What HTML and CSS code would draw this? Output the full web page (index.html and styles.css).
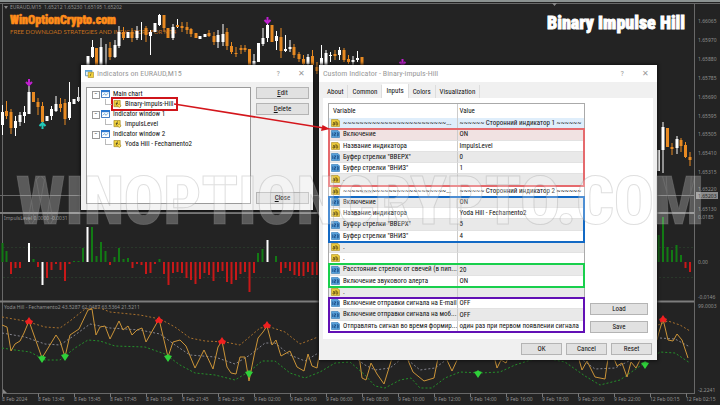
FILE: index.html
```html
<!DOCTYPE html>
<html lang="en">
<head>
<meta charset="utf-8">
<title>Binary Impulse Hill</title>
<link rel="stylesheet" href="styles.css">
</head>
<body>
<main class="desktop">
<svg class="chart" viewBox="0 0 720 405" role="img" aria-label="EURAUD M15 chart">
  <rect class="topbar" width="720" height="2"/>
  <path class="grid" d="M0 3.500H720M2.500 3V393.500H695M694.500 3V393M0 195.500H694"/>
  <path class="split" d="M0 213H694M0 301.500H694"/>
  <path class="level" d="M3 247.500H694M3 277.500H694"/>
  <path class="ticks" d="M2.500 393v4M38.500 393v4M74.500 393v4M110.500 393v4M146.500 393v4M182.500 393v4M218.500 393v4M254.500 393v4M290.500 393v4M326.500 393v4M362.500 393v4M398.500 393v4M434.500 393v4M470.500 393v4M506.500 393v4M542.500 393v4M578.500 393v4M614.500 393v4M650.500 393v4M686.500 393v4"/>
  <path class="mark" d="M4 6h4l-2 3zM552 3h5l-2.500 3zM3 393v-4l4 4z"/>
  <g class="label">
    <text x="10" y="9">EURAUD,M15&#160; 1.65212 1.65230 1.65195 1.65202</text>
    <text x="4" y="220">ImpulsLevel 0.0000 -0.0031</text>
    <text x="4" y="309">Yoda Hill - Fechamento2 43.5287 62.0487 63.5364 21.5211</text>
  </g>
  <g class="label">
    <text x="698" y="23">1.66065</text><text x="698" y="42">1.65970</text><text x="698" y="61">1.65880</text><text x="698" y="80">1.65785</text><text x="698" y="99">1.65690</text><text x="698" y="118">1.65595</text><text x="698" y="136">1.65505</text><text x="698" y="155">1.65410</text><text x="698" y="174">1.65315</text><text x="698" y="191">1.65220</text><text x="698" y="211">1.65130</text><text x="698" y="219">0.0185</text><text x="698" y="264">0.00</text><text x="698" y="299">-0.0146</text><text x="698" y="308">99.0003</text><text x="698" y="392">-2.2241</text>
  </g>
  <rect class="tag" x="696" y="192" width="22" height="7"/><text class="tagtext" x="698" y="198">1.65203</text>
  <g class="label">
    <text x="2" y="401">8 Feb 2024</text><text x="38" y="401">8 Feb 13:45</text><text x="74" y="401">8 Feb 15:45</text><text x="110" y="401">8 Feb 17:45</text><text x="146" y="401">8 Feb 19:45</text><text x="182" y="401">8 Feb 21:45</text><text x="218" y="401">8 Feb 23:45</text><text x="254" y="401">9 Feb 02:00</text><text x="290" y="401">9 Feb 04:00</text><text x="326" y="401">9 Feb 06:00</text><text x="362" y="401">9 Feb 08:00</text><text x="398" y="401">9 Feb 10:00</text><text x="434" y="401">9 Feb 12:00</text><text x="470" y="401">9 Feb 14:00</text><text x="506" y="401">9 Feb 16:00</text><text x="542" y="401">9 Feb 18:00</text><text x="578" y="401">9 Feb 20:00</text><text x="614" y="401">9 Feb 22:00</text><text x="650" y="401">12 Feb 00:15</text><text x="686" y="401">12 Feb 02:15</text>
  </g>
  <text class="brand" x="10" y="24">WinOptionCrypto.com</text>
  <text class="slogan" x="10" y="34">FREE DOWNLOAD STRATEGIES AND INDICATORS FOR MT4</text>
  <text class="headline" x="685" y="29">Binary Impulse Hill</text>

  <path class="wick up" d="M2.500 105V135M15.500 116V136M20 112V126M24.500 106V123M29 86V114M51.500 106V120M56 96V112M69.500 82V120M78.500 87V102M92.500 40V58M101 38V65M106 44V65M115 40V58M119 26V48M137 26V40M141.500 22V40M150.500 30V55M159.500 14V26M173 24V40M177.500 19V28M218 30V48M223 24V46M254 54V65M263 28V46M267.500 23V42M276.500 31V50M285.500 35V52M290 40V52M308 54V65M321.500 45V65M326 50V65M330.500 52V62M339.500 47V60M353 56V65M357.500 51V62M663 122V173M677 136V154"/>
  <path class="wick down" d="M6.500 101V119M11 109V134M38 98V115M42.500 102V125M60.500 98V112M65 99V125M110 42V60M123.500 27V40M132 28V42M146 26V42M164 15V32M182 22V32M187 22V34M191 28V37M209 30V37M214 32V45M227 28V50M231.500 42V54M236 47V57M241 45V54M245 45V52M281 28V58M294 44V58M299 52V62M303.500 55V65M312.500 50V65M335 50V60M344 48V62M348.500 55V64M672 143V155M681 138V152M685.500 142V158M690 152V166M317 62V74"/>
  <path class="body up" d="M2.500 112V125M15.500 121V128M20 115V122M24.500 112V116M29 92V114M47 116V121M51.500 109V116M56 104V111M69.500 102V118M74 99V104M78.500 97V101M88 56V66M92.500 47V57M101 47V66M115 45V57M119 32V46M128 32V38M137 31V38M150.500 32V36M155 23V32M159.500 15V25M173 27V38M200 36V39M205 34V37M218 35V42M223 34V42M254 61V66M258.500 43V62M263 38V44M267.500 25V38M276.500 36V41M285.500 49V51M290 47V49M308 57V64M321.500 58V65M326 53V65M330.500 55V56M339.500 50V55M353 60V62M357.500 58V60M658.500 150V171M663 127V150M677 139V148"/>
  <path class="body down" d="M6.500 111V116M11 112V128M33.500 92V102M38 102V107M42.500 106V122M60.500 104V108M65 103V119M96.500 48V66M110 48V57M123.500 32V38M132 32V38M146 28V35M164 15V28M168 28V38M177.500 25V27M182 26V28M187 27V30M191 29V34M196 33V38M209 33V36M214 36V42M227 32V46M231.500 46V52M236 53V54M241 48V50M245 48V50M249.500 49V65M272 25V42M281 37V51M294 47V55M299 54V59M303.500 59V64M312.500 56V65M317 67V71M335 54V56M344 50V60M348.500 59V62M362 57V65M667.500 128V147M672 147V149M681 140V146M685.500 145V157M690 157V160"/>
  <g class="sell"><path id="sell" d="M29 79v6M26 82l3 3 3-3"/><use href="#sell" x="238.500" y="-62"/><use href="#sell" x="373.500" y="-20"/></g>
  <path class="buy" d="M42.500 129v-6M39.500 126l3-3 3 3"/>

  <path class="hist pos" d="M2.500 243V262M6.500 251V262M33.500 259V262M74 261V262M78.500 261V262M83 248V262M92 227V262M96.500 256V262M101 242V262M105.500 251V262M114.500 257V262M119 248V262M123.500 259V262M128 258V262M159.500 259V262M258 253V262M262.500 249V262M276 256V262M658.500 235V262M663 217V262M667.500 247V262M672 250V262M676.500 245V262M681 255V262"/>
  <path class="hist neg" d="M11 262V274M15.500 262V268M20 262V268M38 262V267M47 262V278M51.500 262V270M56 262V264M60.500 262V270M65 262V281M69.500 262V264M110 262V265M132.500 262V268M137 262V264M141.500 262V265M146 262V274M150.500 262V273M155 262V264M164 262V274M168.500 262V285M173 262V273M177.500 262V272M182 262V273M186.500 262V278M191 262V280M195.500 262V284M200 262V279M204.500 262V273M209 262V275M213.500 262V281M218 262V272M222.500 262V271M227 262V282M231.500 262V284M236 262V280M240.500 262V274M245 262V272M249.500 262V292M254 262V273M281 262V273M285.500 262V268M290 262V271M294.500 262V275M299 262V276M303.500 262V276M308 262V272M312.500 262V275M317 262V275M685.500 262V268M690 262V272"/>
  <path class="hist peak" d="M29 243V262M42.500 262V285M87.500 227V262M267.500 240V262"/>

  <path class="dots hi" d="M2 317L25 321 45 327 60 328 70 321 85 309 100 308 110 312 140 315 160 319 175 327 190 338 205 341 225 342 240 345 260 328 270 327 285 332 300 344 318 337M658 325L668 321 680 325 690 331"/>
  <path class="dots mid" d="M2 333L25 337 45 344 60 345 75 335 90 324 110 328 140 330 160 334 175 345 190 355 215 357 235 364 250 355 265 343 275 343 290 355 305 361 320 352M358 360L365 365 375 370 390 368 400 360M408 360L420 370 435 368 446 360M580 358L595 369 615 368 635 358M660 338L675 339 690 347"/>
  <path class="dots lo" d="M2 348L15 350 30 352 45 360 60 360 75 348 88 340 100 341 115 346 145 347 165 354 180 365 195 373 215 375 235 380 250 371 262 361 275 361 290 373 305 378 320 372 335 363 350 362 365 375 375 386 385 388 400 380 411 378 420 388 432 388 445 378 460 372 480 373 500 372 515 365 540 357 565 362 585 376 600 385 620 380 640 366 660 352 675 353 690 363"/>
  <path class="yoda" d="M2 325L7 327 11 351 15 344 20 341 24 333 29 321 42 358 56 335 60 341 65 357 70 335 79 329 88 310 92 309 96 335 100 327 105 326 110 339 119 321 123 330 128 326 132 335 137 330 142 328 146 342 159 319 168 357 173 342 180 340 186 346 195 368 204 350 213 369 218 347 222 341 227 367 231 373 236 374 240 357 245 357 249 381 254 356 258 338 263 332 267 326 272 345 276 340 281 356 290 351 297 367 304 371 308 354 312 366 317 368 320 350M359 355L362 378 366 380 371 363 377 374 384 384 392 358M407 358L413 372 424 381 434 378 438 358M446 358L452 371 458 358M494 356L497 368 501 360 506 363 508 358M578 356L582 370 587 361 595 377 605 379 608 358M613 356L617 366 622 363 627 377 631 362 636 368 641 358 648 350 657 340 659 332 663 319 668 340 673 341 677 334 682 340 688 358"/>
  <g class="top"><path id="top" d="M29 317l2 3 2 1-1.500 3.500-2.500-1-2.500 1L25 321l2-1z"/><use href="#top" x="130" y="-1"/><use href="#top" x="193" y="20"/><use href="#top" x="238" y="4"/><use href="#top" x="634" y="-2"/></g>
  <g class="low"><path id="low" d="M42 363l-2-3-2-3 3-1 1-1 1 1 3 1-2 3z"/><use href="#low" x="23" y="-2"/><use href="#low" x="126" y="-1"/><use href="#low" x="207" y="15"/><use href="#low" x="436" y="15"/><use href="#low" x="603" y="6"/></g>
</svg>

<svg class="defs" aria-hidden="true">
  <symbol id="i-chart" viewBox="0 0 10 9"><path fill="#fff" stroke="#2a6ab8" d="M.5.5h9v8h-9z"/><path fill="#2a78d0" d="M0 0h10v2.500H0z"/><path fill="none" stroke="#3a86c8" stroke-width=".8" d="M2 6l2-2 1.500 2L8 3.500"/></symbol>
  <symbol id="i-fx" viewBox="0 0 9 9"><path fill="#f2d23c" stroke="#9a7c16" stroke-width=".7" d="M.5.500h7v7h-7z"/><path fill="none" stroke="#3f3a22" stroke-width=".8" d="M5 2C3.500 1.500 4 4 3 6M2.500 4h2.500"/><path fill="#ffe95e" stroke="#8a6c10" stroke-width=".6" d="M6.500 4.500L8.500 6.500 6.500 8.500 4.500 6.500z"/></symbol>
  <symbol id="i-win" viewBox="0 0 10 9"><path fill="#e5f2fb" stroke="#5f94b5" d="M.5.500h7v6h-7z"/><path fill="#5fa5d8" d="M0 0h8v2H0z"/><path fill="#f2d23c" stroke="#9a7c16" stroke-width=".6" d="M3.500 2.500h6v6h-6z"/><path fill="none" stroke="#3f3a22" stroke-width=".7" d="M7 4c-1 0-.5 2-1.500 3"/></symbol>
  <symbol id="i-ab" viewBox="0 0 9 8"><path fill="#e9c93a" stroke="#a98b22" stroke-width=".6" d="M.500.500h6.500l1.500 1.500v5.500h-8z"/><path fill="none" stroke="#655316" stroke-width=".8" d="M2 3.500h1.500v2.500H2V4.800h1.500M5 2v4h1.700V3.800H5"/></symbol>
  <symbol id="i-num" viewBox="0 0 9 8"><path fill="#58a2dc" stroke="#2f77b4" stroke-width=".6" d="M.500.500h6.500l1.500 1.500v5.500h-8z"/><path fill="none" stroke="#123f78" stroke-width=".8" d="M1.800 2.500v3.500M3.200 2.800h1.300v1.400H3.300v1.500h1.400M5.800 2.800h1.400v3H5.800M6 4.200h1"/></symbol>
</svg>

<section class="window list" aria-label="Indicators on EURAUD,M15">
  <header class="titlebar"><svg class="ico"><use href="#i-win"/></svg><h2>Indicators on EURAUD,M15</h2><button class="sys">?</button><button class="sys" aria-label="Close window">✕</button></header>
  <div class="listbody">
    <ul class="tree">
      <li class="node"><svg class="ico"><use href="#i-chart"/></svg>Main chart</li>
      <li class="leaf"><span class="pick"><svg class="ico"><use href="#i-fx"/></svg>Binary-impuls-Hill</span></li>
      <li class="node"><svg class="ico"><use href="#i-chart"/></svg>Indicator window 1</li>
      <li class="leaf"><span><svg class="ico"><use href="#i-fx"/></svg>ImpulsLevel</span></li>
      <li class="node"><svg class="ico"><use href="#i-chart"/></svg>Indicator window 2</li>
      <li class="leaf"><span><svg class="ico"><use href="#i-fx"/></svg>Yoda Hill - Fechamento2</span></li>
    </ul>
    <div class="actions"><button class="btn"><u>E</u>dit</button><button class="btn"><u>D</u>elete</button><button class="btn last"><u>C</u>lose</button></div>
  </div>
</section>

<section class="window custom" aria-label="Custom Indicator">
  <header class="titlebar"><h2>Custom Indicator - Binary-impuls-Hill</h2><button class="sys">?</button><button class="sys" aria-label="Close window">✕</button></header>
  <div class="tabs" role="tablist"><button role="tab">About</button><button role="tab">Common</button><button role="tab" class="on" aria-selected="true">Inputs</button><button role="tab">Colors</button><button role="tab">Visualization</button></div>
  <div class="panel">
    <div class="grid-box">
    <table class="inputs">
      <thead><tr><th>Variable</th><th>Value</th></tr></thead>
      <tbody><tr class="sel"><td><svg class="ico"><use href="#i-ab"/></svg>~~~~~~~~~~~~~~~~~~~~~~~~~...</td><td>~~~~~~ Сторонний индикатор 1 ~~~~~~</td></tr></tbody>
      <tbody class="frame red">
        <tr class="alt"><td><svg class="ico"><use href="#i-num"/></svg>Включение</td><td>ON</td></tr>
        <tr><td><svg class="ico"><use href="#i-ab"/></svg>Название индикатора</td><td>ImpulsLevel</td></tr>
        <tr class="alt"><td><svg class="ico"><use href="#i-num"/></svg>Буфер стрелки "ВВЕРХ"</td><td>0</td></tr>
        <tr><td><svg class="ico"><use href="#i-num"/></svg>Буфер стрелки "ВНИЗ"</td><td>1</td></tr>
        <tr class="alt"><td><svg class="ico"><use href="#i-ab"/></svg>.</td><td></td></tr>
      </tbody>
      <tbody><tr><td><svg class="ico"><use href="#i-ab"/></svg>~~~~~~~~~~~~~~~~~~~~~~~~~...</td><td>~~~~~~ Сторонний индикатор 2 ~~~~~~</td></tr></tbody>
      <tbody class="frame blue">
        <tr class="alt"><td><svg class="ico"><use href="#i-num"/></svg>Включение</td><td>ON</td></tr>
        <tr><td><svg class="ico"><use href="#i-ab"/></svg>Название индикатора</td><td>Yoda Hill - Fechamento2</td></tr>
        <tr class="alt"><td><svg class="ico"><use href="#i-num"/></svg>Буфер стрелки "ВВЕРХ"</td><td>5</td></tr>
        <tr><td><svg class="ico"><use href="#i-num"/></svg>Буфер стрелки "ВНИЗ"</td><td>4</td></tr>
      </tbody>
      <tbody>
        <tr class="alt"><td><svg class="ico"><use href="#i-ab"/></svg>.</td><td></td></tr>
        <tr><td><svg class="ico"><use href="#i-ab"/></svg>.</td><td></td></tr>
      </tbody>
      <tbody class="frame green">
        <tr class="alt"><td><svg class="ico"><use href="#i-num"/></svg>Расстояние стрелок от свечей (в пип...</td><td>20</td></tr>
        <tr><td><svg class="ico"><use href="#i-num"/></svg>Включение звукового алерта</td><td>ON</td></tr>
      </tbody>
      <tbody><tr class="alt"><td><svg class="ico"><use href="#i-ab"/></svg>.</td><td></td></tr></tbody>
      <tbody class="frame purple">
        <tr><td><svg class="ico"><use href="#i-num"/></svg>Включение отправки сигнала на E-mail</td><td>OFF</td></tr>
        <tr class="alt"><td><svg class="ico"><use href="#i-num"/></svg>Включение отправки сигнала на моб...</td><td>OFF</td></tr>
        <tr><td><svg class="ico"><use href="#i-num"/></svg>Отправлять сигнал во время формир...</td><td>один раз при первом появлении сигнала</td></tr>
      </tbody>
    </table>
    </div>
    <div class="side"><button class="btn">Load</button><button class="btn">Save</button></div>
  </div>
  <footer class="foot"><button class="btn">OK</button><button class="btn">Cancel</button><button class="btn">Reset</button></footer>
</section>

<svg class="pointer" viewBox="0 0 160 32" aria-hidden="true"><path fill="none" stroke="#d4161c" stroke-width="1.500" d="M0 4L150 28"/><path fill="#d4161c" d="M156 29l-9 2 1.500-6z"/></svg>
<div class="watermark" aria-hidden="true">WINOPTIONCRYPTO.COM</div>
</main>
</body>
</html>
```
FILE: styles.css
```css
* { box-sizing: border-box; }
body { margin: 0; background: #232323; font-family: "Roboto Condensed", "Liberation Sans", Arial, sans-serif; font-size: 7px; line-height: 10px; color: #111; }
.desktop { position: relative; min-height: 100vh; overflow: hidden; }
.chart { display: block; width: 100%; height: auto; }
.defs { position: absolute; width: 0; height: 0; }
button { font: inherit; color: inherit; padding: 0; border: 0; background: none; }

.topbar { fill: #8b9291; }
.grid { fill: none; stroke: #686868; }
.split { stroke: #7d7d7d; stroke-width: 2; }
.level { stroke: #29382a; stroke-dasharray: 2 2; }
.ticks { stroke: #777; }
.mark { fill: #888; }
.label { fill: #909090; font-family: "Noto Sans", sans-serif; font-size: 5px; }
.tag { fill: #8c8c8c; }
.tagtext { fill: #222; font-family: "Noto Sans", sans-serif; font-size: 5px; }
.brand { fill: #ff8c1a; stroke: #ff8c1a; stroke-width: .6; font: 900 12px Impact, "Roboto Condensed", Roboto, sans-serif; }
.slogan { fill: #c4701c; font: 6px Lato, sans-serif; }
.headline { fill: #fff; stroke: #fff; stroke-width: .8; text-anchor: end; font: 900 18px Impact, "Roboto Condensed", Roboto, sans-serif; }
.wick, .body, .hist, .dots, .yoda, .buy, .sell { fill: none; }
.wick { stroke-width: 1; }
.body { stroke-width: 3; }
.up { stroke: #fff; }
.down { stroke: #e88a22; }
.sell { stroke: #c01fd0; stroke-width: 2; }
.buy { stroke: #22c9b8; stroke-width: 2; }
.hist { stroke-width: 2; }
.pos { stroke: #127a14; }
.neg { stroke: #c81818; }
.peak { stroke: #fff; }
.dots { stroke-dasharray: 2 2; }
.hi { stroke: #a8702c; }
.mid { stroke: #85858f; }
.lo { stroke: #24902a; }
.yoda { stroke: #cb9438; stroke-width: 1; }
.top { fill: #f02020; }
.low { fill: #2fd03a; }

.window { position: absolute; display: flex; flex-direction: column; background: #f0f0f0; box-shadow: 0 0 3px 1px #111; }
.list { left: 81px; top: 65px; width: 232px; height: 145px; }
.custom { left: 319px; top: 65px; width: 338px; height: 295px; }
.titlebar { display: flex; align-items: center; height: 17px; padding: 0 8px 0 4px; background: #fff; color: #999; }
.titlebar h2 { flex: 1; margin: 0; font-size: 8px; font-weight: normal; }
.sys { width: 25px; font-size: 8px; text-align: right; }
.ico { width: 9px; height: 8px; flex: none; vertical-align: middle; margin-right: 3px; }

.listbody { flex: 1; display: flex; gap: 5px; padding: 5px 4px 6px 5px; }
.tree { flex: 1; margin: 0; padding: 1px 6px; border: 1px solid #9a9a9a; background: #fff; list-style: none; }
.tree li { display: flex; align-items: center; position: relative; height: 10px; }
.node { padding-left: 8px; }
.leaf { padding-left: 20px; }
.leaf span { display: flex; align-items: center; padding-right: 3px; }
.leaf .pick { outline: 2px solid #cf151b; }
.node::before { content: "−"; position: absolute; left: -1px; top: 2px; width: 6px; height: 6px; border: 1px solid #999; font-size: 6px; line-height: 4px; text-align: center; }
.leaf::before { content: ""; position: absolute; left: 12px; top: 0; width: 6px; height: 5px; border-left: 1px solid #bbb; border-bottom: 1px solid #bbb; }
.actions { display: flex; flex-direction: column; gap: 4px; width: 53px; }
.actions .last { margin-top: auto; }
.btn { display: block; height: 12px; border: 1px solid #b4b4b4; background: #e1e1e1; text-align: center; line-height: 10px; }

.tabs { display: flex; align-items: flex-end; height: 16px; padding-left: 4px; }
.tabs button { height: 13px; padding: 0 4px; border-right: 1px solid #ddd; }
.tabs .on { height: 14px; background: #fff; }
.panel { flex: 1; display: flex; gap: 5px; margin: 0 4px; padding: 5px 5px 6px; background: #fff; }
.grid-box { flex: 1; min-width: 0; }
.inputs { width: 100%; height: 230px; table-layout: fixed; border-collapse: separate; border-spacing: 0; border: 1px solid #aaa; background: #fff; }
.inputs th { height: 14px; padding: 0 4px; text-align: left; font-weight: normal; }
.inputs td { padding: 0 2px; line-height: 8px; white-space: nowrap; overflow: hidden; border-bottom: 1px solid #e2e2e2; }
.inputs th + th, .inputs td + td { border-left: 1px solid #ccc; padding-left: 2px; }
.alt { background: #e9e9e9; }
.sel { background: #dfeefb; }
.frame { outline: 2px solid; outline-offset: -1px; }
.red { outline-color: #e56a6d; }
.red tr:first-child { background: #f1e2e2; }
.blue { outline-color: #1269c4; }
.green { outline-color: #19cf4c; }
.purple { outline-color: #6210b5; }
.side { display: flex; flex: none; flex-direction: column; justify-content: flex-end; gap: 6px; width: 58px; }
.foot { display: flex; justify-content: flex-end; gap: 4px; height: 21px; padding: 4px 5px; }
.foot .btn { width: 41px; }

.pointer { position: absolute; left: 174px; top: 100px; width: 160px; height: 32px; }
.watermark { position: absolute; left: 0; right: 0; top: 162px; text-align: center; white-space: nowrap; font: 900 66px/80px Impact, "Roboto Condensed", Roboto, sans-serif; color: rgba(255, 255, 255, .25); -webkit-text-stroke: 1px rgba(150, 150, 150, .3); pointer-events: none; }
```
